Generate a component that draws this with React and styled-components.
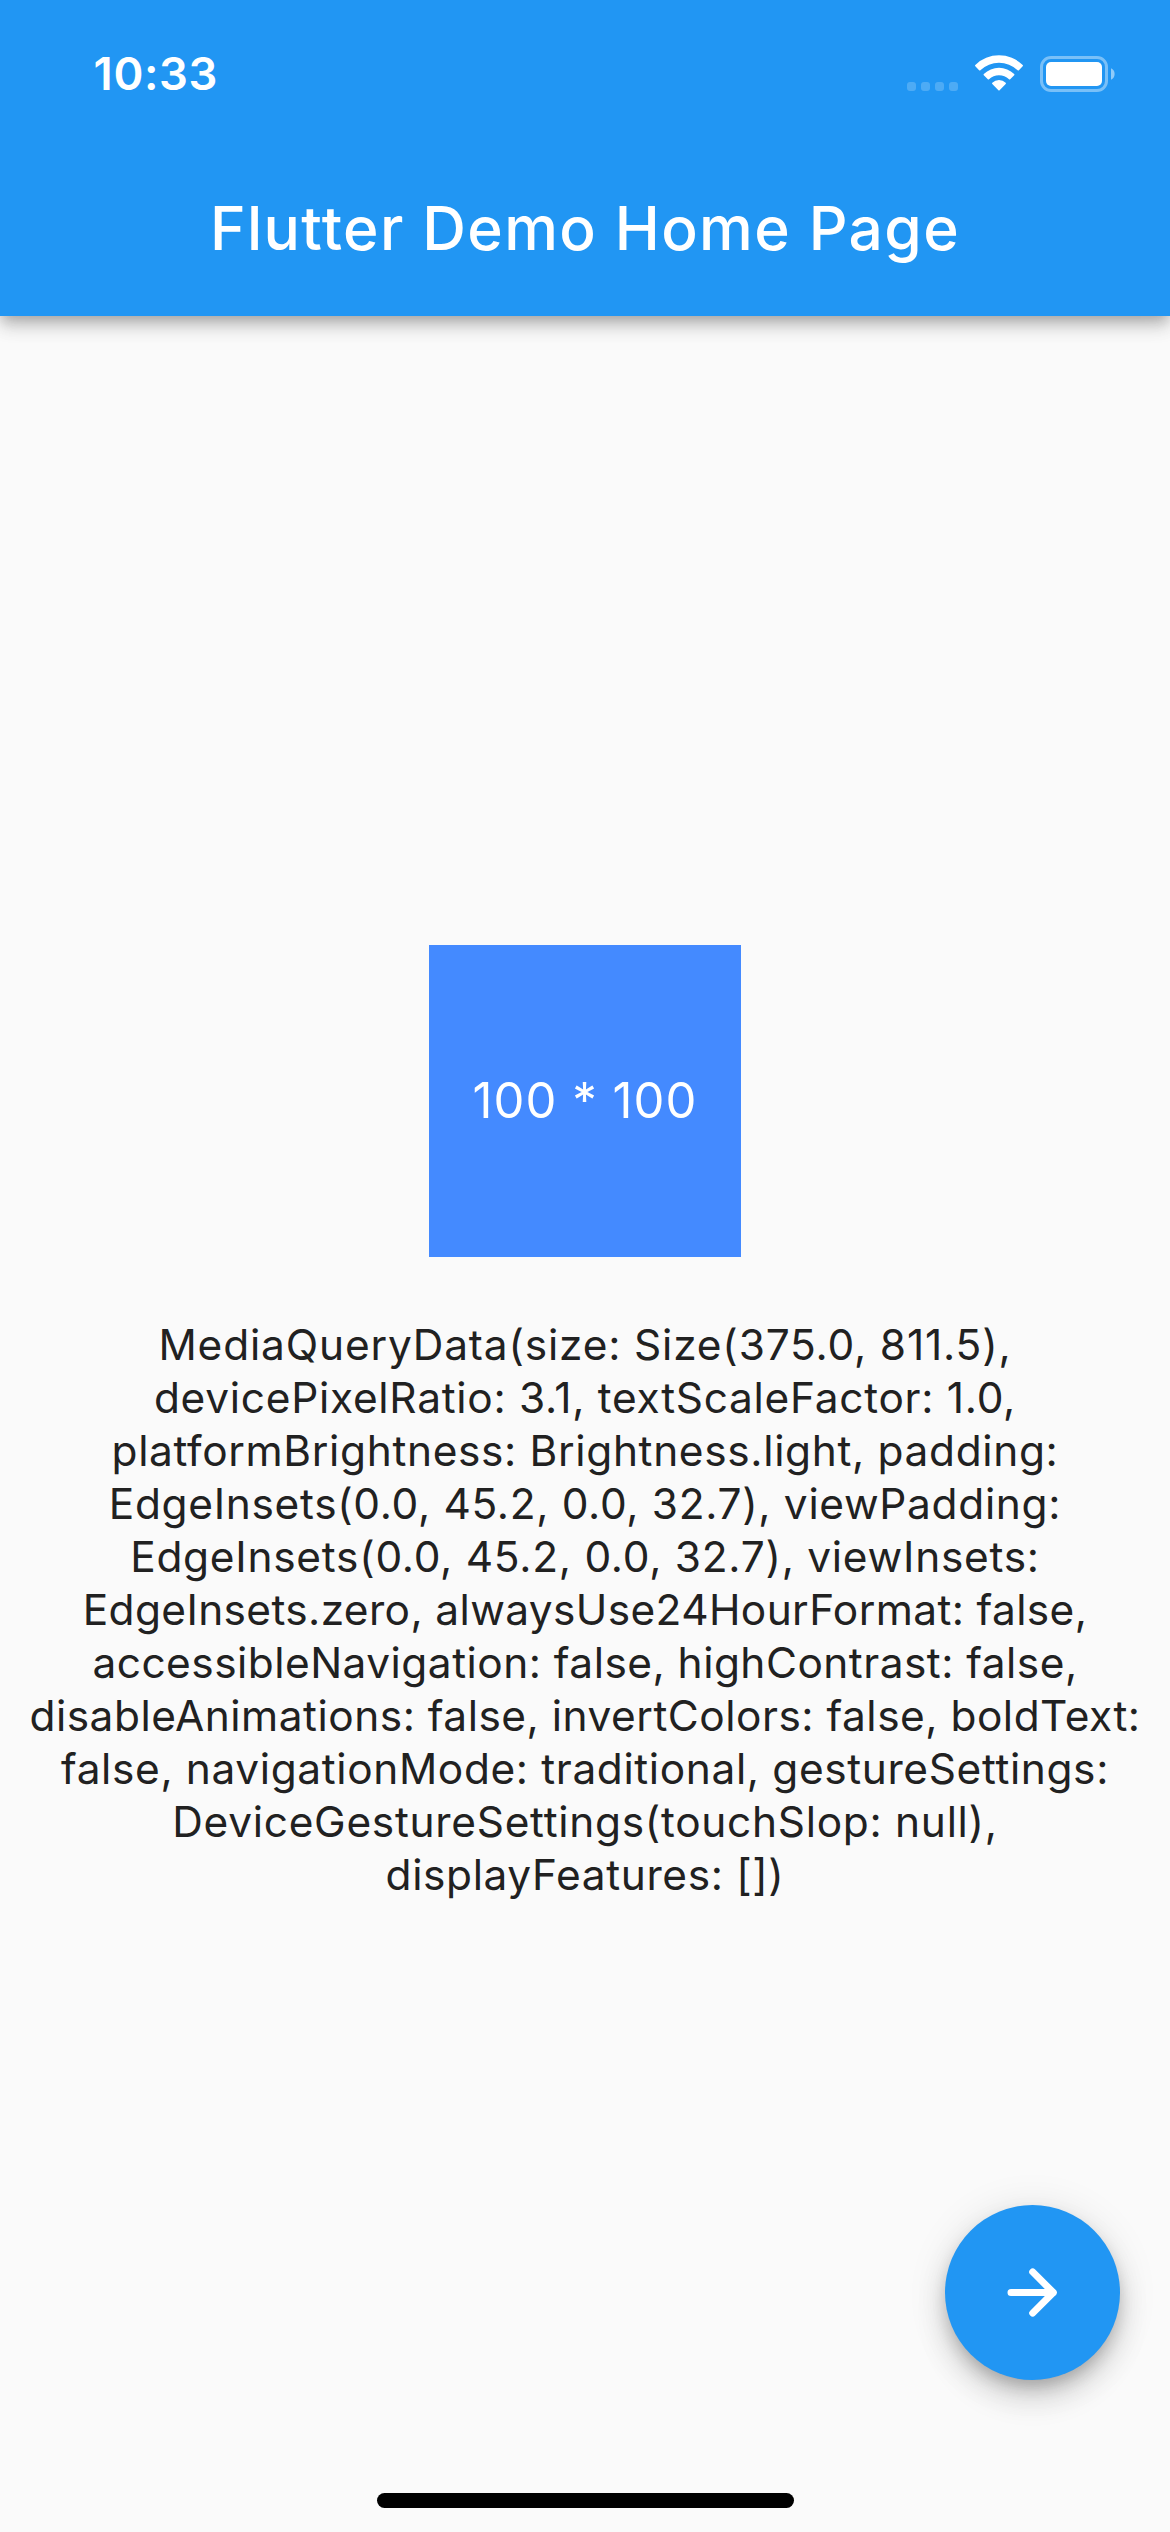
import React from "react";
import styled, { createGlobalStyle } from "styled-components";

const BLUE = "#2196f3";

const GlobalStyle = createGlobalStyle`
  *, *::before, *::after {
    box-sizing: border-box;
  }

  body {
    margin: 0;
    background: #fafafa;
    font-family: Inter, "Noto Sans", sans-serif;
  }
`;

const Screen = styled.div`
  position: relative;
  display: flex;
  flex-direction: column;
  width: 1170px;
  height: 2532px;
  overflow: hidden;
  background: #fafafa;
`;

const Header = styled.header`
  display: flex;
  flex-direction: column;
  flex: none;
  height: 315.6px;
  background: ${BLUE};
  color: #fff;
  box-shadow:
    0 6px 12px -3px rgba(0, 0, 0, 0.2),
    0 12px 16px rgba(0, 0, 0, 0.12),
    0 3px 24px rgba(0, 0, 0, 0.12);
`;

const StatusBar = styled.div`
  display: flex;
  align-items: center;
  justify-content: space-between;
  height: 141px;
  padding: 7px 54px 0 93.6px;
`;

const Clock = styled.time`
  font-size: 45.4px;
  font-weight: 600;
  line-height: 56px;
  letter-spacing: 0.6px;
`;

const StatusIcons = styled.svg`
  display: block;
  width: 212px;
  height: 48px;
`;

const AppBar = styled.div`
  display: flex;
  flex: 1;
  align-items: center;
  justify-content: center;
`;

const Title = styled.h1`
  margin: 0;
  font-size: 60.5px;
  font-weight: 500;
  line-height: 74px;
  letter-spacing: 1.38px;
  white-space: nowrap;
`;

const Body = styled.main`
  display: flex;
  flex: 1;
  flex-direction: column;
  align-items: center;
  justify-content: center;
`;

const Square = styled.div`
  display: flex;
  align-items: center;
  justify-content: center;
  width: 312px;
  height: 312px;
  background: #448aff;
  color: #fff;
  font-size: 49px;
  line-height: 58px;
  letter-spacing: 1.04px;
  font-feature-settings: "calt" 0;
`;

const Details = styled.p`
  margin: 61px 0 2px;
  color: #212121;
  font-size: 42.4px;
  line-height: 53px;
  text-align: center;
  white-space: nowrap;
  font-feature-settings: "calt" 0;
`;

const Line = styled.span`
  display: block;
  letter-spacing: ${({ $tracking }) => $tracking}px;
`;

const FloatingButton = styled.button`
  position: absolute;
  right: 50px;
  bottom: 152px;
  display: flex;
  align-items: center;
  justify-content: center;
  width: 175px;
  height: 175px;
  padding: 0;
  border: 0;
  border-radius: 50%;
  background: ${BLUE};
  color: #fff;
  box-shadow:
    0 9px 16px -3px rgba(0, 0, 0, 0.2),
    0 19px 31px rgba(0, 0, 0, 0.14),
    0 3px 40px rgba(0, 0, 0, 0.1);
`;

const ArrowIcon = styled.svg`
  display: block;
  width: 75px;
  height: 75px;
`;

const HomeIndicator = styled.div`
  position: absolute;
  bottom: 24px;
  left: 377px;
  width: 417px;
  height: 15px;
  border-radius: 8px;
  background: #000;
`;

const lines = [
  { text: "MediaQueryData(size: Size(375.0, 811.5),", tracking: 0.84 },
  { text: "devicePixelRatio: 3.1, textScaleFactor: 1.0,", tracking: 0.73 },
  { text: "platformBrightness: Brightness.light, padding:", tracking: 0.67 },
  { text: "EdgeInsets(0.0, 45.2, 0.0, 32.7), viewPadding:", tracking: 0.69 },
  { text: "EdgeInsets(0.0, 45.2, 0.0, 32.7), viewInsets:", tracking: 0.75 },
  { text: "EdgeInsets.zero, alwaysUse24HourFormat: false,", tracking: 0.39 },
  { text: "accessibleNavigation: false, highContrast: false,", tracking: 0.49 },
  { text: "disableAnimations: false, invertColors: false, boldText:", tracking: 0.52 },
  { text: "false, navigationMode: traditional, gestureSettings:", tracking: 0.64 },
  { text: "DeviceGestureSettings(touchSlop: null),", tracking: 0.72 },
  { text: "displayFeatures: [])", tracking: 0.64 },
];

const signalDots = [3, 17, 31, 45];

function StatusGlyphs() {
  return (
    <StatusIcons viewBox="904 50 212 48" fill="#fff" aria-hidden="true">
      {signalDots.map((x) => (
        <rect key={x} x={904 + x} y="82" width="9" height="9" rx="3" opacity="0.2" />
      ))}
      <path d="M975.3 66.2 Q974.7 65.5 975.3 64.9 A34.2 34.2 0 0 1 1022.7 64.9 Q1023.3 65.5 1022.7 66.2 L1018.9 70.2 Q1018.3 70.8 1017.6 70.2 A27 27 0 0 0 980.4 70.2 Q979.7 70.8 979.1 70.2 Z" />
      <path d="M983.8 75.2 Q983.2 74.5 983.8 73.9 A22 22 0 0 1 1014.2 73.9 Q1014.8 74.5 1014.2 75.2 L1010.2 79.2 Q1009.6 79.7 1009 79.2 A14.8 14.8 0 0 0 989 79.2 Q988.4 79.7 987.8 79.2 Z" />
      <path d="M992.3 83.9 Q991.7 83.3 992.3 82.7 A9.6 9.6 0 0 1 1005.7 82.7 Q1006.3 83.3 1005.7 83.9 L999.6 90.3 Q999 90.9 998.4 90.3 Z" />
      <rect x="1041.5" y="57.5" width="65" height="33" rx="9.5" fill="none" stroke="#fff" strokeWidth="3" opacity="0.4" />
      <rect x="1046" y="62" width="56" height="24" rx="5" />
      <path d="M1111 68.3 A6.3 6.3 0 0 1 1111 79.7 Z" opacity="0.5" />
    </StatusIcons>
  );
}

export default function App() {
  return (
    <>
      <GlobalStyle />
      <Screen>
        <Header>
          <StatusBar>
            <Clock>10:33</Clock>
            <StatusGlyphs />
          </StatusBar>
          <AppBar>
            <Title>Flutter Demo Home Page</Title>
          </AppBar>
        </Header>
        <Body>
          <Square>100 * 100</Square>
          <Details>
            {lines.map(({ text, tracking }) => (
              <Line key={text} $tracking={tracking}>
                {text}
              </Line>
            ))}
          </Details>
        </Body>
        <FloatingButton aria-label="Next">
          <ArrowIcon viewBox="0 0 75 75" fill="none" stroke="currentColor" strokeWidth="7" strokeLinecap="round" strokeLinejoin="round" aria-hidden="true">
            <path d="M16 37.5H58.3M37.7 16.9L58.3 37.5L37.7 58.1" />
          </ArrowIcon>
        </FloatingButton>
        <HomeIndicator />
      </Screen>
    </>
  );
}
